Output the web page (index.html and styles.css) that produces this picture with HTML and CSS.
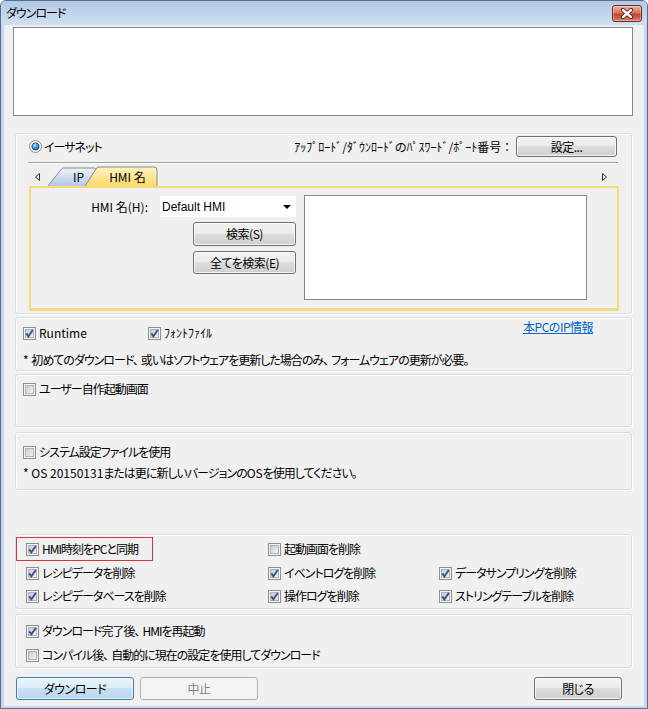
FILE: index.html
```html
<!DOCTYPE html>
<html lang="ja">
<head>
<meta charset="utf-8">
<title>ダウンロード</title>
<link rel="stylesheet" href="styles.css">
</head>
<body>
<svg class="defs" aria-hidden="true">
  <defs>
    <linearGradient id="cbg" x1="0" y1="0" x2="1" y2="1">
      <stop offset="0" stop-color="#c3c9d2"/>
      <stop offset="1" stop-color="#f7f7f7"/>
    </linearGradient>
    <radialGradient id="rdg" cx="0.4" cy="0.35" r="0.7">
      <stop offset="0" stop-color="#c4f0ff"/>
      <stop offset="0.5" stop-color="#3a93dd"/>
      <stop offset="1" stop-color="#12478a"/>
    </radialGradient>
    <linearGradient id="ipg" x1="0" y1="0" x2="0" y2="1">
      <stop offset="0" stop-color="#eef3fa"/>
      <stop offset="1" stop-color="#b3c8e8"/>
    </linearGradient>
    <linearGradient id="hmig" x1="0" y1="0" x2="0" y2="1">
      <stop offset="0" stop-color="#fff4c2"/>
      <stop offset="1" stop-color="#fbd96c"/>
    </linearGradient>
  </defs>
  <symbol id="cb-off" viewBox="0 0 13 13">
    <rect x="0.5" y="0.5" width="12" height="12" fill="#f4f4f4" stroke="#8e8f8f"/>
    <rect x="2.5" y="2.5" width="8" height="8" fill="url(#cbg)" stroke="#aeb3b9"/>
  </symbol>
  <symbol id="cb-on" viewBox="0 0 13 13">
    <rect x="0.5" y="0.5" width="12" height="12" fill="#f4f4f4" stroke="#8e8f8f"/>
    <rect x="2.5" y="2.5" width="8" height="8" fill="url(#cbg)" stroke="#aeb3b9"/>
    <path d="M3.3 6.4 L5.4 9.3 L9.8 3" fill="none" stroke="#3b4f8c" stroke-width="1.9"/>
  </symbol>
</svg>

<div class="window">
  <div class="titlebar">
    <span class="title">ダウンロード</span>
    <span class="close">
      <svg width="14" height="11" viewBox="0 0 14 11">
        <path d="M3 2 L11 9 M11 2 L3 9" stroke="#5a1d14" stroke-width="4.2" stroke-linecap="round"/>
        <path d="M3 2 L11 9 M11 2 L3 9" stroke="#ffffff" stroke-width="2.4" stroke-linecap="round"/>
      </svg>
    </span>
  </div>

  <div class="client">
    <div class="log"></div>

    <div class="group g1">
      <div class="toprow">
        <span class="radio-item">
          <svg class="radio" width="13" height="13" viewBox="0 0 13 13">
            <circle cx="6.5" cy="6.5" r="6" fill="#f4f4f4" stroke="#8e8f8f"/>
            <circle cx="6.5" cy="6.5" r="3.6" fill="url(#rdg)" stroke="#1d4e86" stroke-width="0.8"/>
          </svg>
          <span>イーサネット</span>
        </span>
        <span class="pwlabel">ｱｯﾌﾟﾛｰﾄﾞ/ﾀﾞｳﾝﾛｰﾄﾞのﾊﾟｽﾜｰﾄﾞ/ﾎﾟｰﾄ番号 ：</span>
        <button class="btn btn-set">設定...</button>
      </div>
      <div class="divider"></div>
      <div class="tabrow">
        <svg class="arrow-l" width="16" height="22" viewBox="0 0 16 22">
          <polygon points="11.5,9.5 7.5,13 11.5,16.5" fill="none" stroke="#333"/>
        </svg>
        <div class="tabstrip">
          <svg class="tabshapes" width="115" height="22" viewBox="0 0 115 22">
            <path d="M4 22 L17.5 5 Q18.3 4 19.5 4 L50 4 Q52 4 52 6 L52 22" fill="url(#ipg)" stroke="#8a8a8a"/>
            <path d="M41 22 L53 3.5 Q53.6 3 55 3 L110 3 Q113 3 113 6 L113 22" fill="url(#hmig)" stroke="#8a8a8a"/>
          </svg>
          <span class="tab-ip">IP</span>
          <span class="tab-hmi">HMI 名</span>
        </div>
        <svg class="arrow-r" width="18" height="22" viewBox="0 0 18 22">
          <polygon points="1.5,9.5 5.5,13 1.5,16.5" fill="none" stroke="#333"/>
        </svg>
      </div>
      <div class="panel">
        <div class="form">
          <div class="frow">
            <span class="flabel">HMI 名(H):</span>
            <div class="select">
              <span class="select-text">Default HMI</span>
              <svg class="select-arrow" width="8" height="4" viewBox="0 0 8 4"><polygon points="0,0 8,0 4,4" fill="#000"/></svg>
            </div>
          </div>
          <button class="btn btn-search">検索(S)</button>
          <button class="btn btn-all">全てを検索(E)</button>
        </div>
        <div class="list"></div>
      </div>
    </div>

    <div class="group g2">
      <div class="row">
        <span class="cbitem w125"><svg class="cb"><use href="#cb-on"/></svg><span class="latin">Runtime</span></span>
        <span class="cbitem"><svg class="cb"><use href="#cb-on"/></svg><span class="halfw">ﾌｫﾝﾄﾌｧｲﾙ</span></span>
        <a class="link" href="#">本PCのIP情報</a>
      </div>
      <div class="note"><span class="latin">* </span>初めてのダウンロード<span class="comma">、</span>或いはソフトウェアを更新した場合のみ<span class="comma">、</span>フォームウェアの更新が必要。</div>
    </div>

    <div class="group g3">
      <div class="row">
        <span class="cbitem"><svg class="cb"><use href="#cb-off"/></svg><span>ユーザー自作起動画面</span></span>
      </div>
    </div>

    <div class="group g4">
      <div class="row">
        <span class="cbitem"><svg class="cb"><use href="#cb-off"/></svg><span>システム設定ファイルを使用</span></span>
      </div>
      <div class="note note4"><span class="latin">* OS 20150131</span>または更に新しいバージョンの<span class="latin">OS</span>を使用してください。</div>
    </div>

    <div class="group g5">
      <div class="cell redbox"><span class="cbitem"><svg class="cb"><use href="#cb-on"/></svg><span>HMI時刻をPCと同期</span></span></div>
      <div class="cell"><span class="cbitem"><svg class="cb"><use href="#cb-off"/></svg><span>起動画面を削除</span></span></div>
      <div class="cell"></div>
      <div class="cell"><span class="cbitem"><svg class="cb"><use href="#cb-on"/></svg><span>レシピデータを削除</span></span></div>
      <div class="cell"><span class="cbitem"><svg class="cb"><use href="#cb-on"/></svg><span>イベントログを削除</span></span></div>
      <div class="cell"><span class="cbitem"><svg class="cb"><use href="#cb-on"/></svg><span>データサンプリングを削除</span></span></div>
      <div class="cell"><span class="cbitem"><svg class="cb"><use href="#cb-on"/></svg><span>レシピデータベースを削除</span></span></div>
      <div class="cell"><span class="cbitem"><svg class="cb"><use href="#cb-on"/></svg><span>操作ログを削除</span></span></div>
      <div class="cell"><span class="cbitem"><svg class="cb"><use href="#cb-on"/></svg><span>ストリングテーブルを削除</span></span></div>
    </div>

    <div class="group g6">
      <div class="row6">
        <span class="cbitem"><svg class="cb"><use href="#cb-on"/></svg><span>ダウンロード完了後<span class="comma">、</span>HMIを再起動</span></span>
      </div>
      <div class="row6">
        <span class="cbitem"><svg class="cb"><use href="#cb-off"/></svg><span>コンパイル後<span class="comma">、</span>自動的に現在の設定を使用してダウンロード</span></span>
      </div>
    </div>

    <div class="buttons">
      <button class="btn btn-default">ダウンロード</button>
      <button class="btn btn-disabled">中止</button>
      <button class="btn btn-close">閉じる</button>
    </div>
  </div>
</div>
</body>
</html>
```

FILE: styles.css
```css
* { box-sizing: border-box; }

body {
  margin: 0;
  font-family: "Noto Sans CJK JP", "Noto Sans", sans-serif;
  font-size: 12px;
  line-height: 16px;
  color: #000;
  font-feature-settings: "palt";
  letter-spacing: -1px;
}

.defs { position: absolute; width: 0; height: 0; overflow: hidden; }

.window {
  width: 648px;
  height: 709px;
  border: 1px solid #5b6d85;
  border-radius: 6px 6px 0 0;
  background: #c4d7ee;
  padding: 0 3px 2px 3px;
  display: flex;
  flex-direction: column;
  overflow: hidden;
}

.titlebar {
  height: 24px;
  margin: 0 -3px;
  padding: 0 5px;
  display: flex;
  align-items: flex-start;
  background: linear-gradient(#b2c9e6, #d0e0f2);
}

.title { margin-top: 4px; }

.close {
  margin-left: auto;
  margin-top: 4px;
  width: 30px;
  height: 17px;
  border: 1px solid #6e2d24;
  border-radius: 3px;
  background: linear-gradient(#eab3a3 0%, #d8735b 45%, #c2432a 55%, #d8816a 100%);
  box-shadow: inset 0 0 0 1px rgba(255, 255, 255, 0.35);
  display: flex;
  align-items: center;
  justify-content: center;
}

.client {
  flex: 1;
  background: #f0f0f0;
  display: flex;
  flex-direction: column;
  padding-top: 2px;
}

.log {
  margin-left: 9px;
  width: 620px;
  height: 89px;
  background: #fff;
  border: 1px solid #828790;
  flex: none;
}

.group {
  margin-left: 11px;
  width: 617px;
  border: 1px solid #d5dfe5;
  border-radius: 3px;
  box-shadow: inset 1px 1px 0 #fff, 1px 1px 0 #fff;
  flex: none;
}

/* group 1 */
.g1 { margin-top: 17px; padding: 2px 12px 2px 12px; }

.toprow { display: flex; align-items: center; height: 21px; }

.radio-item { display: flex; align-items: center; gap: 2px; margin-left: 1px; }
.radio { display: block; }

.pwlabel { margin-left: auto; margin-right: 6px; letter-spacing: 0; }

.btn {
  font: inherit;
  font-feature-settings: "palt";
  letter-spacing: -0.5px;
  padding: 0;
  color: #000;
  border: 1px solid #707070;
  border-radius: 3px;
  background: linear-gradient(#f2f2f2 0%, #ebebeb 49%, #dddddd 50%, #cfcfcf 100%);
  box-shadow: inset 0 0 0 1px rgba(255, 255, 255, 0.75);
  display: flex;
  align-items: center;
  justify-content: center;
  flex: none;
}

.btn-set { width: 101px; height: 21px; margin-right: 2px; }

.divider {
  margin-top: 5px;
  margin-right: 1px;
  height: 2px;
  border-top: 1px solid #a0a0a0;
  border-bottom: 1px solid #fff;
}

.tabrow { display: flex; height: 22px; }
.arrow-l, .arrow-r { display: block; flex: none; }
.arrow-r { margin-left: auto; }

.tabstrip {
  position: relative;
  width: 115px;
  height: 22px;
  display: flex;
  align-items: center;
  padding-top: 3px;
  flex: none;
  letter-spacing: 0;
}
.tabshapes { position: absolute; left: 0; top: 0; }
.tab-ip { position: relative; margin-left: 29px; }
.tab-hmi { position: relative; margin-left: 25px; }

.panel {
  margin-left: 1px;
  width: 590px;
  height: 125px;
  border: 2px solid #f4da7c;
  border-bottom-width: 3px;
  display: flex;
  padding-top: 7px;
}

.form {
  width: 265px;
  display: flex;
  flex-direction: column;
  align-items: flex-end;
}

.frow { display: flex; align-items: center; width: 100%; height: 21px; margin-top: 1px; }
.flabel { flex: 1; text-align: right; padding-right: 12px; letter-spacing: 0; }

.select {
  width: 136px;
  height: 21px;
  background: #fff;
  display: flex;
  align-items: center;
  padding-left: 2px;
}
.select-text { font-family: "Liberation Sans", Arial, sans-serif; font-size: 12px; letter-spacing: 0; }
.select-arrow { margin-left: auto; margin-right: 5px; display: block; }

.btn-search { width: 103px; height: 24px; margin-top: 5px; }
.btn-all { width: 103px; height: 23px; margin-top: 5px; }

.list {
  margin-left: 8px;
  width: 283px;
  height: 105px;
  background: #fff;
  border: 1px solid #828790;
}

/* checkbox rows */
.row { display: flex; align-items: center; height: 16px; }
.cbitem { display: flex; align-items: center; gap: 3px; white-space: nowrap; }
.cb { width: 13px; height: 13px; display: block; flex: none; }
.w125 { width: 125px; }
.latin, .halfw { letter-spacing: 0; white-space: pre; }
.comma { margin-right: 3px; }

.link {
  margin-left: auto;
  margin-right: 38px;
  align-self: flex-start;
  margin-top: -6px;
  color: #0066cc;
  text-decoration: underline;
  letter-spacing: -0.5px;
}

.note { margin-top: 11px; white-space: nowrap; }

.g2 { margin-top: 3px; padding: 7px 0 2px 7px; }
.g3 { margin-top: 3px; padding: 6px 0 29px 7px; }
.g4 { margin-top: 5px; padding: 11px 0 8px 7px; }
.note4 { margin-top: 5px; }

.g5 {
  margin-top: 44px;
  padding: 2px 0 1px 0;
  display: grid;
  grid-template-columns: 242px 171px 1fr;
  grid-template-rows: 24px 24px 22px;
}
.cell { display: flex; align-items: center; padding-left: 10px; }
.redbox {
  width: 137px;
  border: 1px solid #cc3b3b;
  padding-left: 9px;
}

.g6 { margin-top: 5px; padding: 4px 0 0 10px; }
.row6 { display: flex; align-items: center; height: 24px; }

.buttons {
  display: flex;
  margin-top: 9px;
  padding-left: 12px;
  padding-right: 22px;
}
.buttons .btn { height: 23px; }
.btn-default {
  width: 118px;
  border-color: #3c7fb1;
  background: linear-gradient(#eaf4fb 0%, #dcecf8 49%, #c9e0f2 50%, #bcd7ee 100%);
  box-shadow: inset 0 0 0 1px rgba(255, 255, 255, 0.6);
}
.btn-disabled {
  width: 118px;
  margin-left: 6px;
  color: #838383;
  border-color: #adb2b5;
  background: #f4f4f4;
  box-shadow: none;
}
.btn-close { width: 88px; margin-left: auto; }
```
